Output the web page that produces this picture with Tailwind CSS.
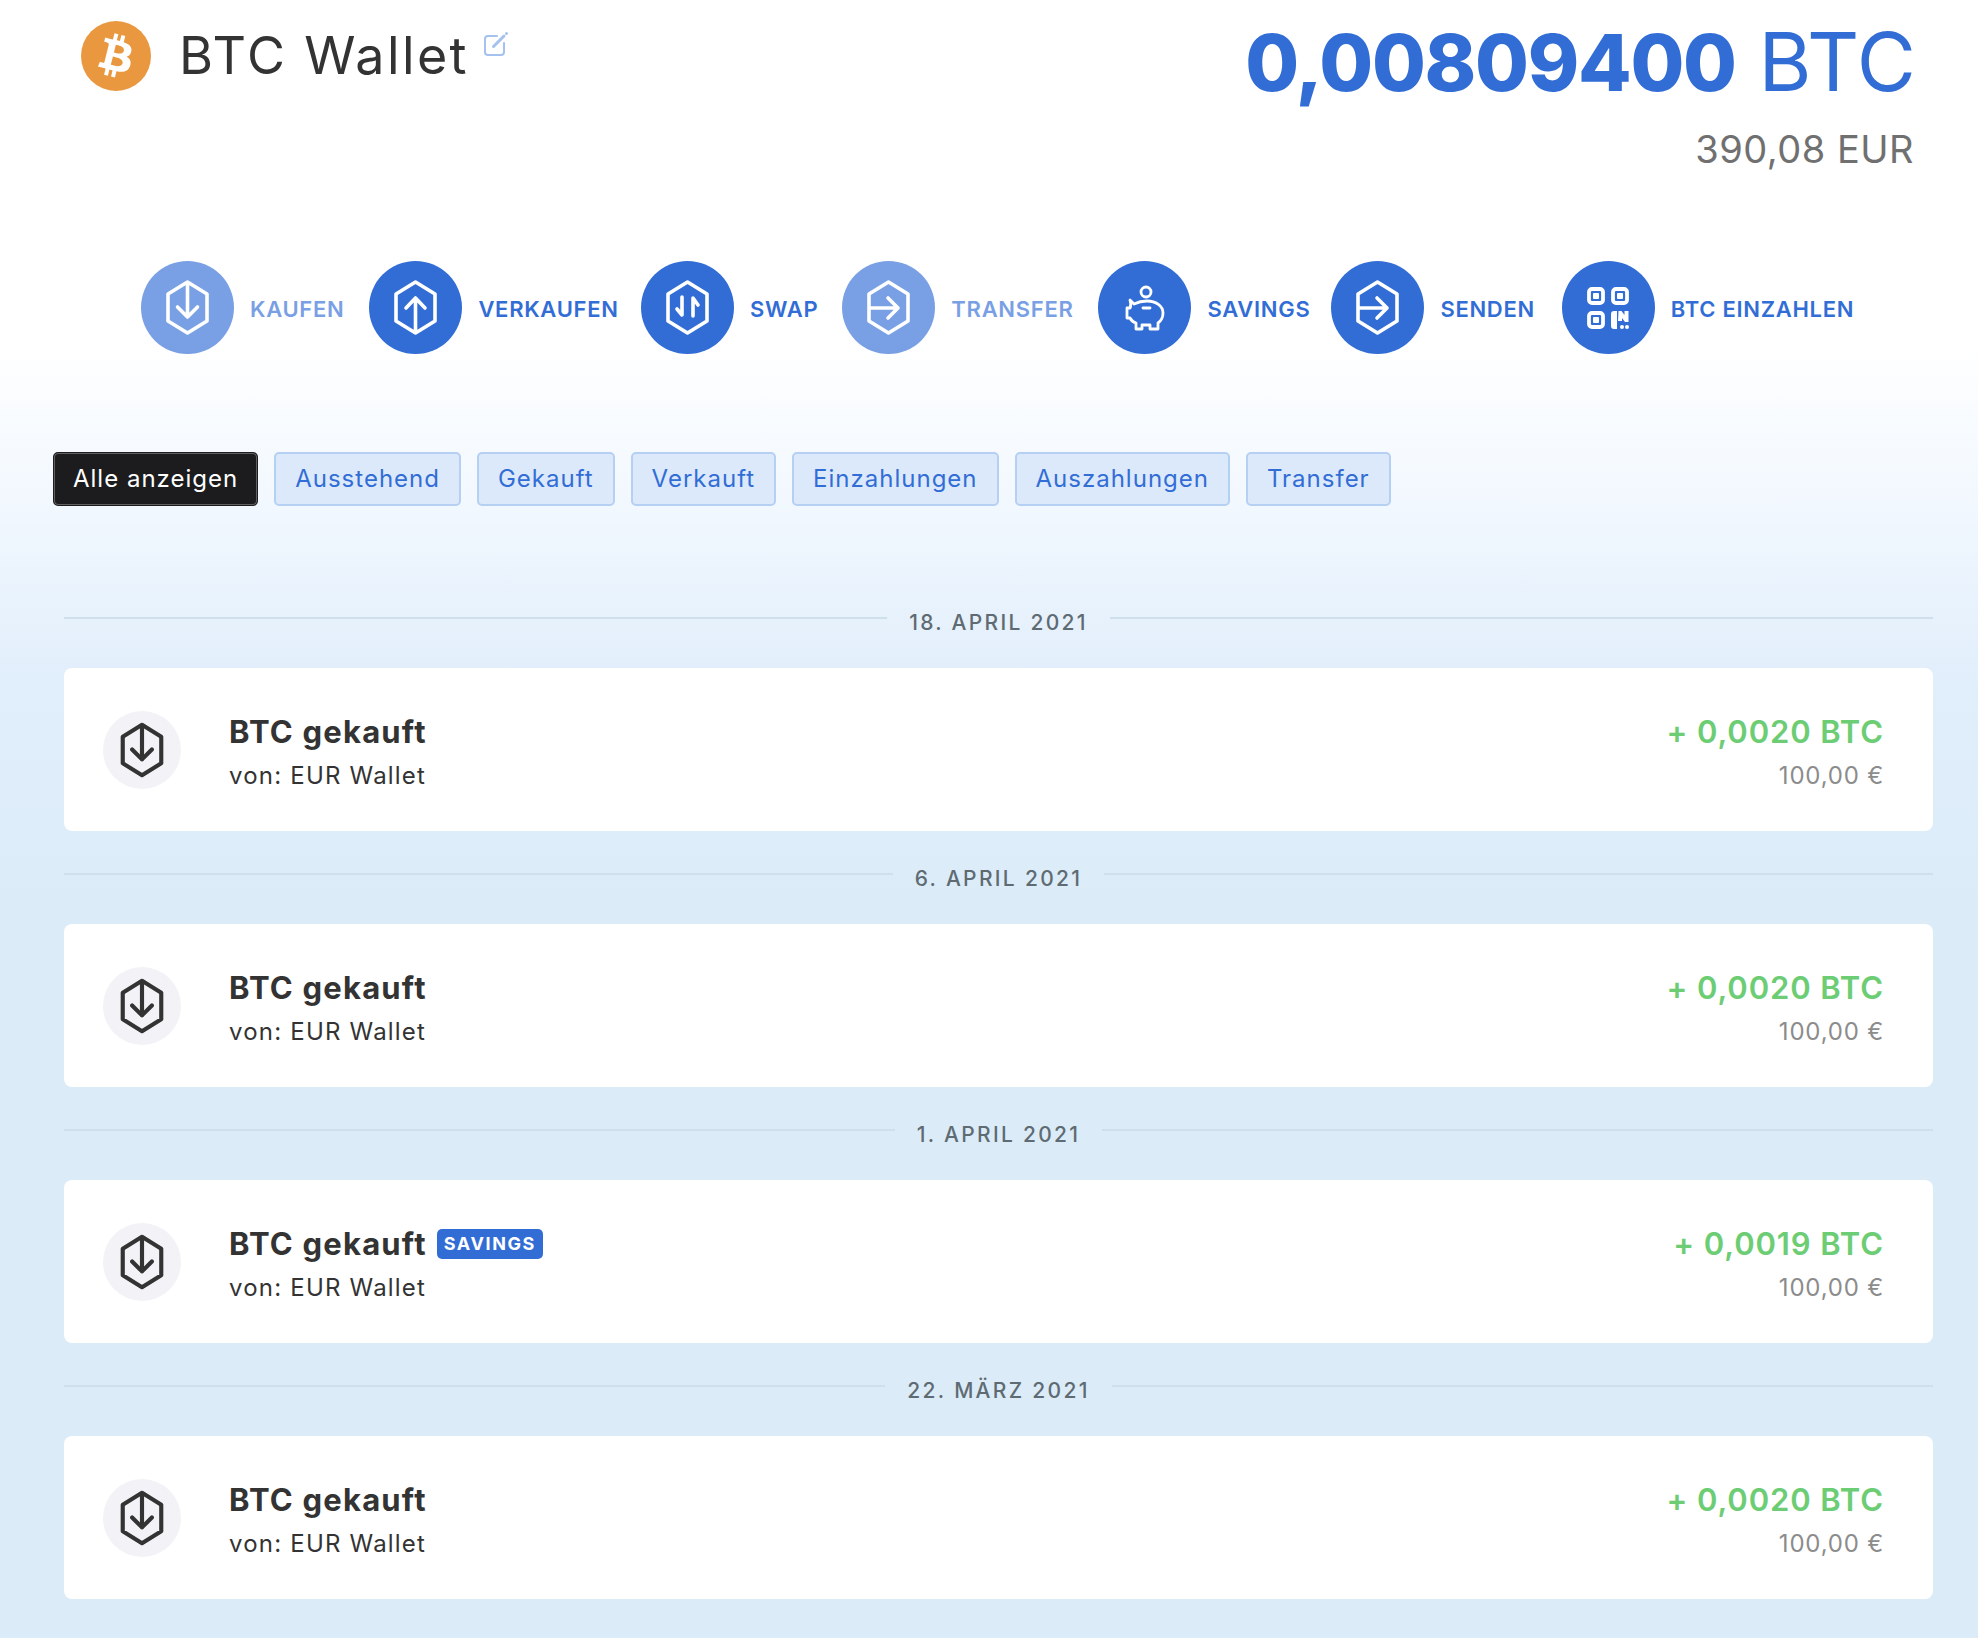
<!DOCTYPE html>
<html lang="de">
<head>
<meta charset="utf-8">
<script src="https://cdn.jsdelivr.net/npm/@tailwindcss/browser@4"></script>
<title>BTC Wallet</title>
</head>
<body class="m-0 font-['Inter',sans-serif]">
<svg class="hidden">
  <symbol id="hex-down" viewBox="0 0 93 93"><path d="M46.5 21 66 33V60L46.5 72 27 60V33Z M46.5 21V56 M36.500 46 46.5 56 56.500 46" fill="none" stroke="currentColor" stroke-linecap="round" stroke-linejoin="round"/></symbol>
  <symbol id="hex-up" viewBox="0 0 93 93"><path d="M46.5 21 66 33V60L46.5 72 27 60V33Z M46.5 72V37 M37 47 46.5 37 56 47" fill="none" stroke="currentColor" stroke-linecap="round" stroke-linejoin="round"/></symbol>
  <symbol id="hex-right" viewBox="0 0 93 93"><path d="M46.5 21 66 33V60L46.5 72 27 60V33Z M27 47H56 M46 37 56 47 46 57" fill="none" stroke="currentColor" stroke-linecap="round" stroke-linejoin="round"/></symbol>
  <symbol id="hex-swap" viewBox="0 0 93 93"><path d="M46.5 21 66 33V60L46.5 72 27 60V33Z M41 36V54L36 48 M52 55V37L57 44" fill="none" stroke="currentColor" stroke-linecap="round" stroke-linejoin="round"/></symbol>
  <symbol id="pig" viewBox="0 0 93 93"><g fill="none" stroke="currentColor" stroke-width="2.800" stroke-linejoin="round" stroke-linecap="round"><circle cx="48" cy="31" r="5"/><path d="M32 39 36 43C40 41 45 40 49 40 58 40 65 45 65 52 65 57 63 60 60 62V68H52V64H44V68H38V62C35 61 33 59 32 57H29V47H32C33 45 33 42 32 39Z"/><path d="M45 47H52"/></g></symbol>
  <symbol id="qr" viewBox="0 0 93 93"><g fill="none" stroke="currentColor" stroke-width="3.800"><rect x="27" y="28" width="14" height="14" rx="3"/><rect x="51" y="28" width="14" height="14" rx="3"/><rect x="27" y="52" width="14" height="14" rx="3"/></g><g fill="currentColor"><rect x="31" y="32" width="6" height="6" rx="1"/><rect x="55" y="32" width="6" height="6" rx="1"/><rect x="31" y="56" width="6" height="6" rx="1"/><path d="M49 53a3 3 0 0 1 3-3h3v18h-3a3 3 0 0 1-3-3Z"/><path d="M56.500 50h3l3 4v-4h4v11h-3.500l-3-4v3h-4Z"/><circle cx="60" cy="66" r="2"/><circle cx="65" cy="66" r="2"/></g></symbol>
</svg>

<div class="h-[1638px] w-[1978px] overflow-hidden bg-[linear-gradient(180deg,#ffffff_0px,#ffffff_340px,#f0f7fe_520px,#e1eefb_680px,#dbecf8_900px)]">
  <header class="flex h-[261px] items-start justify-between pl-[81px] pr-[62px]">
    <div class="mt-[21px] flex items-start">
      <svg class="h-[70px] w-[70px]" viewBox="0 0 24 24"><circle cx="12" cy="12" r="12" fill="#e9983f"/><path fill="#fff" d="M17.288 10.291c.24-1.59-.974-2.45-2.64-3.03l.54-2.153-1.315-.33-.525 2.107c-.345-.087-.705-.167-1.064-.25l.526-2.127-1.32-.33-.54 2.165c-.285-.067-.565-.132-.84-.2l-1.815-.45-.35 1.407s.975.225.955.236c.535.136.63.486.615.766l-1.477 5.92c-.075.166-.24.406-.614.314.015.02-.96-.24-.96-.24l-.66 1.51 1.71.426.93.242-.54 2.19 1.32.327.54-2.17c.36.1.705.19 1.05.273l-.51 2.154 1.32.33.545-2.19c2.24.427 3.93.257 4.64-1.774.57-1.637-.03-2.58-1.217-3.196.854-.193 1.5-.76 1.68-1.93h.01zm-3.01 4.22c-.404 1.64-3.157.75-4.05.53l.72-2.9c.896.23 3.757.67 3.33 2.37zm.41-4.24c-.37 1.49-2.662.735-3.405.55l.654-2.64c.744.18 3.137.524 2.75 2.084v.006z"/></svg>
      <h1 class="ml-[28px] text-[52px] font-normal leading-[70px] tracking-[2.4px] text-[#333333]">BTC Wallet</h1>
      <svg class="ml-[14px] mt-[10px] h-[26px] w-[26px]" viewBox="0 0 26 26" fill="none" stroke="#a5c1ef" stroke-width="2" stroke-linecap="round" stroke-linejoin="round"><path d="M14 5H5a3 3 0 0 0-3 3v13a3 3 0 0 0 3 3h13a3 3 0 0 0 3-3v-9"/><path d="M10.500 15.500 21 5" stroke-width="3"/><path d="M23.500 2.500h.01" stroke-width="3"/></svg>
    </div>
    <div class="text-right">
      <div class="mt-[16px] text-[81px] font-normal leading-[92px] text-[#326dd6]"><span class="text-[78px] font-extrabold tracking-[-1.3px]">0,00809400</span> BTC</div>
      <div class="mr-[2px] mt-[17px] text-[38px] leading-[46px] tracking-[0.5px] text-[#707070]">390,08 EUR</div>
    </div>
  </header>

  <nav class="flex h-[93px] pl-[141px] text-[22px] font-semibold tracking-[0.7px] text-[#326dd6]">
    <a class="flex items-center gap-[16px] opacity-65"><span class="h-[93px] w-[93px] rounded-full bg-[#326dd6] text-white"><svg class="h-full w-full stroke-[3.6]"><use href="#hex-down"/></svg></span><span class="mt-[3px]">KAUFEN</span></a>
    <a class="ml-[25px] flex items-center gap-[16px]"><span class="h-[93px] w-[93px] rounded-full bg-[#326dd6] text-white"><svg class="h-full w-full stroke-[3.6]"><use href="#hex-up"/></svg></span><span class="mt-[3px]">VERKAUFEN</span></a>
    <a class="ml-[22.5px] flex items-center gap-[16px]"><span class="h-[93px] w-[93px] rounded-full bg-[#326dd6] text-white"><svg class="h-full w-full stroke-[3.6]"><use href="#hex-swap"/></svg></span><span class="mt-[3px]">SWAP</span></a>
    <a class="ml-[24px] flex items-center gap-[16px] opacity-65"><span class="h-[93px] w-[93px] rounded-full bg-[#326dd6] text-white"><svg class="h-full w-full stroke-[3.6]"><use href="#hex-right"/></svg></span><span class="mt-[3px]">TRANSFER</span></a>
    <a class="ml-[25px] flex items-center gap-[16px]"><span class="h-[93px] w-[93px] rounded-full bg-[#326dd6] text-white"><svg class="h-full w-full"><use href="#pig"/></svg></span><span class="mt-[3px]">SAVINGS</span></a>
    <a class="ml-[21px] flex items-center gap-[16px]"><span class="h-[93px] w-[93px] rounded-full bg-[#326dd6] text-white"><svg class="h-full w-full stroke-[3.6]"><use href="#hex-right"/></svg></span><span class="mt-[3px]">SENDEN</span></a>
    <a class="ml-[27px] flex items-center gap-[16px]"><span class="h-[93px] w-[93px] rounded-full bg-[#326dd6] text-white"><svg class="h-full w-full"><use href="#qr"/></svg></span><span class="mt-[3px]">BTC EINZAHLEN</span></a>
  </nav>

  <div class="mt-[98px] flex gap-[16px] pl-[53px] text-[24px] leading-[50px] tracking-[1px] text-[#326dd6]">
    <button class="h-[54px] rounded-[5px] border-2 border-[#1c1c1e] bg-[#1c1c1e] px-[18px] text-white outline outline-1 -outline-offset-2 outline-white/30">Alle anzeigen</button>
    <button class="h-[54px] rounded-[5px] border-2 border-[#b6d0f3] bg-[#dce9fa] px-[19px]">Ausstehend</button>
    <button class="h-[54px] rounded-[5px] border-2 border-[#b6d0f3] bg-[#dce9fa] px-[19px]">Gekauft</button>
    <button class="h-[54px] rounded-[5px] border-2 border-[#b6d0f3] bg-[#dce9fa] px-[19px]">Verkauft</button>
    <button class="h-[54px] rounded-[5px] border-2 border-[#b6d0f3] bg-[#dce9fa] px-[19px]">Einzahlungen</button>
    <button class="h-[54px] rounded-[5px] border-2 border-[#b6d0f3] bg-[#dce9fa] px-[19px]">Auszahlungen</button>
    <button class="h-[54px] rounded-[5px] border-2 border-[#b6d0f3] bg-[#dce9fa] px-[19px]">Transfer</button>
  </div>

  <main class="mt-[94px] pl-[64px] pr-[45px]">
    <div class="flex h-[44px] items-center gap-[22px] text-[21px] font-medium tracking-[2.3px] text-[#5f6b72]"><span class="mt-[-8px] h-[2px] flex-1 bg-[#cfdfec]"></span><span class="mt-[1px]">18. APRIL 2021</span><span class="mt-[-8px] h-[2px] flex-1 bg-[#cfdfec]"></span></div>
    <article class="mt-[24px] flex h-[163px] items-center rounded-[8px] bg-white pl-[39px] pr-[49px]">
      <span class="h-[78px] w-[78px] rounded-full bg-[#f2f2f7] text-[#333333]"><svg class="h-full w-full stroke-[4.2]" viewBox="7 7 79 79"><use href="#hex-down" width="93" height="93"/></svg></span>
      <div class="ml-[48px] flex-1 pt-[8px]"><div class="text-[31px] font-bold leading-[40px] tracking-[1.2px] text-[#333333]">BTC gekauft</div><div class="mt-[4px] text-[24px] leading-[40px] tracking-[1.2px] text-[#333333]">von: EUR Wallet</div></div>
      <div class="pt-[8px] text-right"><div class="text-[31px] font-semibold leading-[40px] tracking-[0.9px] text-[#6ccd74]">+ 0,0020 BTC</div><div class="mt-[4px] text-[24px] leading-[40px] tracking-[0.8px] text-[#8c8c8c]">100,00 €</div></div>
    </article>

    <div class="mt-[25px] flex h-[44px] items-center gap-[22px] text-[21px] font-medium tracking-[2.3px] text-[#5f6b72]"><span class="mt-[-8px] h-[2px] flex-1 bg-[#cfdfec]"></span><span class="mt-[1px]">6. APRIL 2021</span><span class="mt-[-8px] h-[2px] flex-1 bg-[#cfdfec]"></span></div>
    <article class="mt-[24px] flex h-[163px] items-center rounded-[8px] bg-white pl-[39px] pr-[49px]">
      <span class="h-[78px] w-[78px] rounded-full bg-[#f2f2f7] text-[#333333]"><svg class="h-full w-full stroke-[4.2]" viewBox="7 7 79 79"><use href="#hex-down" width="93" height="93"/></svg></span>
      <div class="ml-[48px] flex-1 pt-[8px]"><div class="text-[31px] font-bold leading-[40px] tracking-[1.2px] text-[#333333]">BTC gekauft</div><div class="mt-[4px] text-[24px] leading-[40px] tracking-[1.2px] text-[#333333]">von: EUR Wallet</div></div>
      <div class="pt-[8px] text-right"><div class="text-[31px] font-semibold leading-[40px] tracking-[0.9px] text-[#6ccd74]">+ 0,0020 BTC</div><div class="mt-[4px] text-[24px] leading-[40px] tracking-[0.8px] text-[#8c8c8c]">100,00 €</div></div>
    </article>

    <div class="mt-[25px] flex h-[44px] items-center gap-[22px] text-[21px] font-medium tracking-[2.3px] text-[#5f6b72]"><span class="mt-[-8px] h-[2px] flex-1 bg-[#cfdfec]"></span><span class="mt-[1px]">1. APRIL 2021</span><span class="mt-[-8px] h-[2px] flex-1 bg-[#cfdfec]"></span></div>
    <article class="mt-[24px] flex h-[163px] items-center rounded-[8px] bg-white pl-[39px] pr-[49px]">
      <span class="h-[78px] w-[78px] rounded-full bg-[#f2f2f7] text-[#333333]"><svg class="h-full w-full stroke-[4.2]" viewBox="7 7 79 79"><use href="#hex-down" width="93" height="93"/></svg></span>
      <div class="ml-[48px] flex-1 pt-[8px]"><div class="flex items-center text-[31px] font-bold leading-[40px] tracking-[1.2px] text-[#333333]">BTC gekauft<span class="ml-[10px] rounded-[5px] bg-[#326dd6] px-[7px] text-[18px] font-bold leading-[30px] tracking-[1.6px] text-white">SAVINGS</span></div><div class="mt-[4px] text-[24px] leading-[40px] tracking-[1.2px] text-[#333333]">von: EUR Wallet</div></div>
      <div class="pt-[8px] text-right"><div class="text-[31px] font-semibold leading-[40px] tracking-[0.9px] text-[#6ccd74]">+ 0,0019 BTC</div><div class="mt-[4px] text-[24px] leading-[40px] tracking-[0.8px] text-[#8c8c8c]">100,00 €</div></div>
    </article>

    <div class="mt-[25px] flex h-[44px] items-center gap-[22px] text-[21px] font-medium tracking-[2.3px] text-[#5f6b72]"><span class="mt-[-8px] h-[2px] flex-1 bg-[#cfdfec]"></span><span class="mt-[1px]">22. MÄRZ 2021</span><span class="mt-[-8px] h-[2px] flex-1 bg-[#cfdfec]"></span></div>
    <article class="mt-[24px] flex h-[163px] items-center rounded-[8px] bg-white pl-[39px] pr-[49px]">
      <span class="h-[78px] w-[78px] rounded-full bg-[#f2f2f7] text-[#333333]"><svg class="h-full w-full stroke-[4.2]" viewBox="7 7 79 79"><use href="#hex-down" width="93" height="93"/></svg></span>
      <div class="ml-[48px] flex-1 pt-[8px]"><div class="text-[31px] font-bold leading-[40px] tracking-[1.2px] text-[#333333]">BTC gekauft</div><div class="mt-[4px] text-[24px] leading-[40px] tracking-[1.2px] text-[#333333]">von: EUR Wallet</div></div>
      <div class="pt-[8px] text-right"><div class="text-[31px] font-semibold leading-[40px] tracking-[0.9px] text-[#6ccd74]">+ 0,0020 BTC</div><div class="mt-[4px] text-[24px] leading-[40px] tracking-[0.8px] text-[#8c8c8c]">100,00 €</div></div>
    </article>
  </main>
</div>
</body>
</html>
